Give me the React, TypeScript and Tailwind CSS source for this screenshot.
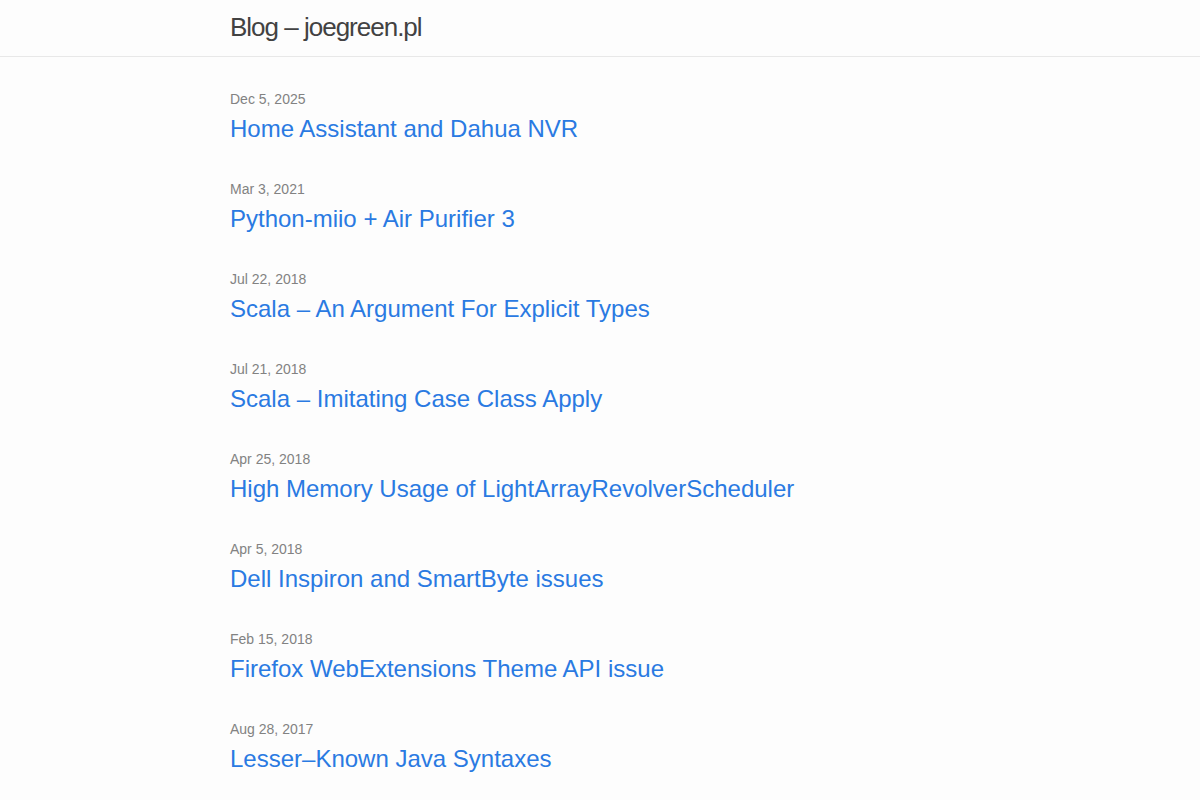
import React from "react";

const posts = [
  { date: "Dec 5, 2025", title: "Home Assistant and Dahua NVR" },
  { date: "Mar 3, 2021", title: "Python-miio + Air Purifier 3" },
  { date: "Jul 22, 2018", title: "Scala – An Argument For Explicit Types" },
  { date: "Jul 21, 2018", title: "Scala – Imitating Case Class Apply" },
  { date: "Apr 25, 2018", title: "High Memory Usage of LightArrayRevolverScheduler" },
  { date: "Apr 5, 2018", title: "Dell Inspiron and SmartByte issues" },
  { date: "Feb 15, 2018", title: "Firefox WebExtensions Theme API issue" },
  { date: "Aug 28, 2017", title: "Lesser–Known Java Syntaxes" },
];

export default function App() {
  return (
    <div className="min-h-screen bg-[#fdfdfd] text-[#111] font-['Liberation_Sans',Arial,sans-serif]">
      <header className="h-[57px] border-b border-[#e8e8e8]">
        <div className="mx-auto w-[740px]">
          <a
            href="#"
            className="block text-[26px] leading-[54px] tracking-[-1px] font-light text-[#424242]"
          >
            Blog – joegreen.pl
          </a>
        </div>
      </header>

      <main className="mx-auto w-[740px] pt-[30px]">
        <ul className="flex flex-col gap-[30px]">
          {posts.map((post) => (
            <li key={post.title}>
              <span className="block text-[14px] leading-[24px] text-[#828282]">{post.date}</span>
              <h3>
                <a href="#" className="block text-[24px] leading-[36px] text-[#2a7ae2]">
                  {post.title}
                </a>
              </h3>
            </li>
          ))}
        </ul>
      </main>
    </div>
  );
}
